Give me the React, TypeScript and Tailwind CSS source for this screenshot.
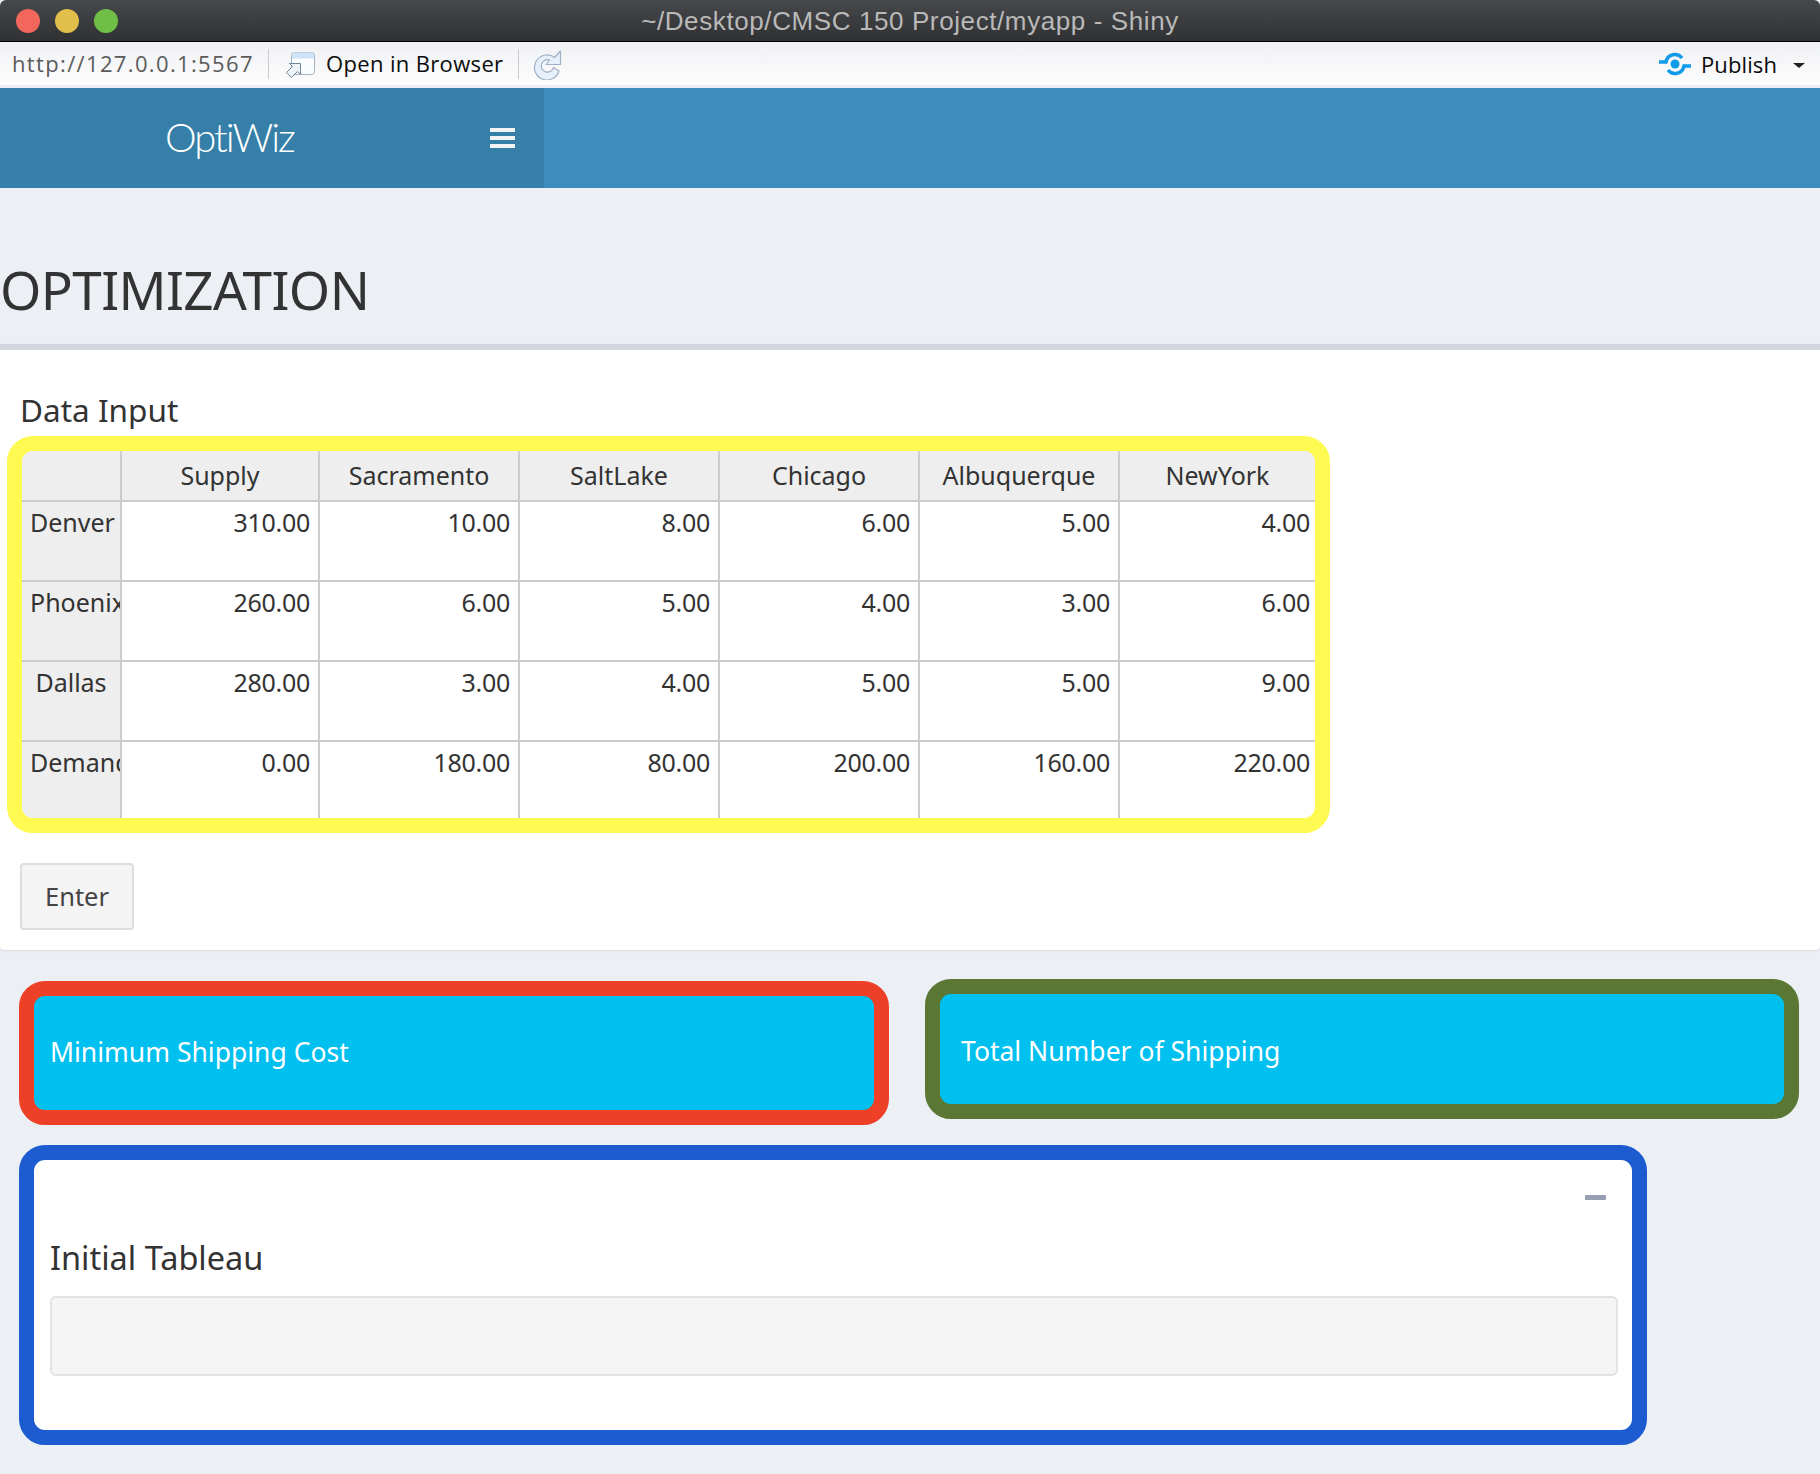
const COLUMNS = ['Supply', 'Sacramento', 'SaltLake', 'Chicago', 'Albuquerque', 'NewYork'];

const ROWS = [
  { label: 'Denver', center: false, values: ['310.00', '10.00', '8.00', '6.00', '5.00', '4.00'] },
  { label: 'Phoenix', center: false, values: ['260.00', '6.00', '5.00', '4.00', '3.00', '6.00'] },
  { label: 'Dallas', center: true, values: ['280.00', '3.00', '4.00', '5.00', '5.00', '9.00'] },
  { label: 'Demand', center: false, values: ['0.00', '180.00', '80.00', '200.00', '160.00', '220.00'] },
];

const COL_WIDTHS = ['w-[198px]', 'w-[200px]', 'w-[200px]', 'w-[200px]', 'w-[200px]', 'flex-1'];

function TitleBar() {
  return (
    <div className="relative flex h-[42px] items-center rounded-t-md border-b border-black bg-gradient-to-b from-[#47484b] to-[#303133] pl-4 font-['Liberation_Sans',sans-serif]">
      <div className="flex gap-[15px]">
        <span className="h-6 w-6 rounded-full bg-[#f2665c]" />
        <span className="h-6 w-6 rounded-full bg-[#e2bf4b]" />
        <span className="h-6 w-6 rounded-full bg-[#6fbf47]" />
      </div>
      <span className="absolute inset-x-0 top-[7px] text-center text-[26px] leading-7 tracking-[0.6px] text-[#b9b9b9]">
        ~/Desktop/CMSC 150 Project/myapp - Shiny
      </span>
    </div>
  );
}

function Toolbar() {
  return (
    <div className="flex h-[43px] items-center bg-gradient-to-b from-[#f0f1f4] to-[#fdfdfd] font-['Open_Sans',sans-serif] text-[22px]">
      <span className="ml-[12px] w-[256px] tracking-[1.35px] text-[#5b5b5b]">http://127.0.0.1:5567</span>
      <div className="h-[30px] w-px bg-[#c9cbcf]" />
      <svg className="ml-4 h-[30px] w-[30px]" viewBox="0 0 30 30" fill="none">
        <rect x="6.5" y="3.5" width="23" height="22" rx="3" fill="#fbfcfd" stroke="#a3b4c6" />
        <path d="M7 6.5a3 3 0 0 1 3-3h16a3 3 0 0 1 3 3v3H7z" fill="#cfe3f8" />
        <path d="M1.5 23.5l6-6-3-3h11v11l-3-3-6 6z" fill="#eef3f8" stroke="#71879b" strokeLinejoin="round" />
      </svg>
      <span className="ml-[11px] w-[192px] tracking-[0.35px] text-[#0b0b0b]">Open in Browser</span>
      <div className="h-[30px] w-px bg-[#c9cbcf]" />
      <svg className="ml-[13px] h-[32px] w-[30px]" viewBox="0 0 30 32" fill="none">
        <path
          d="M22.5 9.5A12.5 12.5 0 1 0 27 23l-5.5-3.5A6.2 6.2 0 1 1 17.5 12l-3.5 4.5h14.5V3z"
          fill="#e6effa"
          stroke="#9fb0c4"
          strokeWidth="1.2"
          strokeLinejoin="round"
        />
      </svg>
      <div className="ml-auto flex items-center pr-[15px]">
        <svg className="h-7 w-8" viewBox="0 0 32 28" fill="none">
          <circle cx="16" cy="14" r="4.5" fill="#0f9be8" />
          <path d="M0 12h7a9 9 0 0 1 16-4M32 16h-7a9 9 0 0 1-16 4" stroke="#0f9be8" strokeWidth="3.5" />
        </svg>
        <span className="ml-[10px] mt-[2px] tracking-[0.1px] text-[#0b0b0b]">Publish</span>
        <span className="ml-[16px] mt-1 h-0 w-0 border-x-[6px] border-t-[5px] border-x-transparent border-t-[#222]" />
      </div>
    </div>
  );
}

function AppHeader() {
  return (
    <div className="mt-[3px] flex h-[100px] bg-[#3c8dbc]">
      <div className="flex w-[544px] items-center bg-[#367fa9]">
        <span className="ml-[165px] mb-[2px] w-[325px] font-['Lato',sans-serif] text-[40px] font-light tracking-[-2px] text-white">
          OptiWiz
        </span>
        <div className="flex w-[25px] flex-col gap-[4px]">
          <span className="h-[4px] bg-[#f2f4f6]" />
          <span className="h-[4px] bg-[#f2f4f6]" />
          <span className="h-[4px] bg-[#f2f4f6]" />
        </div>
      </div>
    </div>
  );
}

function DataTable() {
  return (
    <div className="ml-[7px] mt-[7px] w-[1323px] overflow-hidden rounded-[26px] border-[15px] border-[#fffa52]">
      <div className="flex h-[51px] border-b-2 border-[#cccccc] bg-[#eeeeee]">
        <div className="w-[100px] border-r-2 border-[#cccccc]" />
        {COLUMNS.map((name, i) => (
          <div
            key={name}
            className={`flex items-center justify-center text-[25px] ${COL_WIDTHS[i]} ${i < 5 ? 'border-r-2 border-[#cccccc]' : ''}`}
          >
            {name}
          </div>
        ))}
      </div>
      {ROWS.map((row, r) => (
        <div key={row.label} className={`flex ${r < 3 ? 'h-[80px] border-b-2 border-[#cccccc]' : 'h-[76px]'}`}>
          <div
            className={`w-[100px] overflow-hidden whitespace-nowrap border-r-2 border-[#cccccc] bg-[#eeeeee] pt-[2px] text-[25px] ${row.center ? 'text-center' : 'pl-[8px]'}`}
          >
            {row.label}
          </div>
          {row.values.map((value, i) => (
            <div
              key={i}
              className={`pt-[2px] text-right text-[25px] tracking-[-0.3px] ${i === 5 ? 'pr-[5px]' : 'pr-[8px]'} ${COL_WIDTHS[i]} ${i < 5 ? 'border-r-2 border-[#cccccc]' : ''}`}
            >
              {value}
            </div>
          ))}
        </div>
      ))}
    </div>
  );
}

export default function App() {
  return (
    <div className="h-[1474px] w-[1820px] overflow-hidden bg-[#ecf0f5] font-['Noto_Sans',sans-serif] text-[#333333]">
      <TitleBar />
      <Toolbar />
      <AppHeader />

      <h1 className="mt-[74px] h-[56px] text-[53px] leading-[56px] tracking-[-0.6px]">OPTIMIZATION</h1>

      {/* Data input card */}
      <div className="mt-[26px] h-[606px] rounded-b-[4px] border-t-[6px] border-[#d2d6de] bg-white shadow-[0_1px_2px_rgba(0,0,0,0.1)]">
        <h3 className="ml-[20px] mt-[41px] h-[38px] text-[31.5px] leading-[38px]">Data Input</h3>
        <DataTable />
        <button className="ml-[20px] mt-[30px] h-[67px] w-[114px] rounded-[4px] border-2 border-[#dddddd] bg-[#f4f4f4] text-[25.5px] text-[#444444]">
          Enter
        </button>
      </div>

      {/* Value boxes */}
      <div className="mt-[29px] flex items-start text-[26.5px] text-white">
        <div className="ml-[19px] mt-[2px] flex h-[144px] w-[870px] items-center rounded-[26px] border-[15px] border-[#ee4026] bg-[#00c0ef] pl-[16px]">
          Minimum Shipping Cost
        </div>
        <div className="ml-[36px] flex h-[140px] w-[874px] items-center rounded-[26px] border-[15px] border-[#5a7733] bg-[#00c0ef] pl-[21px] pt-[5px]">
          Total Number of Shipping
        </div>
      </div>

      {/* Initial tableau box */}
      <div className="relative ml-[19px] mt-[20px] h-[300px] w-[1628px] rounded-[26px] border-[15px] border-[#1d5bd0] bg-white px-[16px]">
        <span className="absolute right-[26px] top-[35px] h-[5px] w-[21px] rounded-[1px] bg-[#97a0b3]" />
        <h3 className="mt-[75px] text-[32.5px] leading-[46px] text-[#333333]">Initial Tableau</h3>
        <div className="mt-[15px] h-[80px] w-[1568px] rounded-[6px] border-2 border-[#e3e3e3] bg-[#f5f5f5]" />
      </div>
    </div>
  );
}
